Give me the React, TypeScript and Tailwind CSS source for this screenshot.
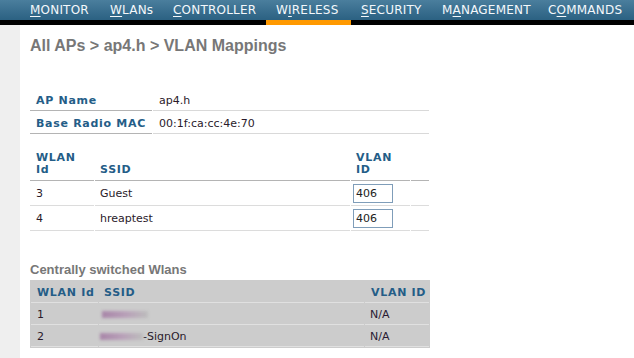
import React from "react";

const nav = [
  { pre: "", u: "M", post: "ONITOR", cls: "w-[80px]" },
  { pre: "", u: "W", post: "LANs", cls: "w-[63px]" },
  { pre: "", u: "C", post: "ONTROLLER", cls: "w-[103px]" },
  { pre: "W", u: "I", post: "RELESS", cls: "w-[85px]" },
  { pre: "", u: "S", post: "ECURITY", cls: "w-[81px]" },
  { pre: "M", u: "A", post: "NAGEMENT", cls: "w-[106px]" },
  { pre: "C", u: "O", post: "MMANDS", cls: "w-[92px]" },
];

const verdana = { fontFamily: '"DejaVu Sans", Verdana, sans-serif' };
const arial = { fontFamily: '"Liberation Sans", Arial, sans-serif' };

function Blur({ w }: { w: string }) {
  return (
    <span className={`inline-block align-middle h-[7px] ${w} blur-[1.5px] bg-gradient-to-r from-[#a886a8] via-[#b89fb8] to-[#bdbdbd]`} />
  );
}

const th = "font-bold text-[#245d87] tracking-[0.7px]";

export default function App() {
  return (
    <div className="w-[634px] h-[358px] overflow-hidden bg-white flex flex-col" style={verdana}>
      {/* nav */}
      <div className="h-[20px] flex pl-[20px] bg-gradient-to-b from-[#4a7e9d] to-[#2b6182]">
        {nav.map((n, i) => (
          <div key={i} className={`${n.cls} pl-[10px] text-[12px] leading-[20px] text-[#f4f8fb] whitespace-nowrap tracking-[0.2px]`}>
            {n.pre}
            <u className="underline underline-offset-[2px]">{n.u}</u>
            {n.post}
          </div>
        ))}
      </div>
      <div className="h-[5px] bg-black flex">
        <div className="w-[266px]" />
        <div className="w-[85px] bg-[#ff9900]" />
      </div>

      <div className="flex flex-1">
        <div className="w-[20px] bg-[#efefef]" />
        <div className="flex-1 pl-[10px]">
          <div className="mt-[12px] text-[16px] leading-[18px] font-bold text-[#777777]" style={arial}>
            All APs &gt; ap4.h &gt; VLAN Mappings
          </div>

          {/* AP info */}
          <div className="mt-[33px] grid grid-cols-[122px_276px] gap-x-[1px] text-[11px] leading-[13px]">
            <div className={`pt-[6px] pb-[3px] pl-[6px] border-b border-[#b4b4b4] ${th}`}>AP Name</div>
            <div className="pt-[6px] pb-[3px] pl-[6px] border-b border-[#d9d9d9] text-[#2a1a2a]">ap4.h</div>
            <div className={`pt-[6px] pb-[3px] pl-[6px] border-b border-[#b4b4b4] ${th}`}>Base Radio MAC</div>
            <div className="pt-[6px] pb-[3px] pl-[6px] border-b border-[#d9d9d9] text-[#2a1a2a]">00:1f:ca:cc:4e:70</div>
          </div>

          {/* WLAN table */}
          <div className="mt-[14px] grid grid-cols-[64px_255px_59px_18px] gap-x-[1px] text-[11px] leading-[12px] w-[399px]">
            <div className={`pt-[4px] pb-[4px] pl-[6px] border-b border-[#b4b4b4] flex flex-col justify-end ${th}`}>
              <span>WLAN</span>
              <span>Id</span>
            </div>
            <div className={`pt-[4px] pb-[4px] pl-[5px] border-b border-[#b4b4b4] flex flex-col justify-end ${th}`}>
              <span>SSID</span>
            </div>
            <div className={`pt-[4px] pb-[4px] pl-[5px] border-b border-[#b4b4b4] flex flex-col justify-end ${th}`}>
              <span>VLAN</span>
              <span>ID</span>
            </div>
            <div className="border-b border-[#b4b4b4]" />

            {[
              { id: "3", ssid: "Guest" },
              { id: "4", ssid: "hreaptest" },
            ].map((r) => (
              <React.Fragment key={r.id}>
                <div className="h-[25px] pt-[6px] pl-[6px] leading-[13px] border-b border-[#dcdcdc] text-[#2a1a2a]">{r.id}</div>
                <div className="h-[25px] pt-[6px] pl-[5px] leading-[13px] border-b border-[#dcdcdc] text-[#2a1a2a]">{r.ssid}</div>
                <div className="h-[25px] pt-[3px] pl-[2px] border-b border-[#dcdcdc]">
                  <div className="w-[40px] h-[19px] border border-[#7f9db9] bg-white pl-[2px] text-[11px] leading-[17px] text-[#222]">406</div>
                </div>
                <div className="h-[25px] border-b border-[#dcdcdc]" />
              </React.Fragment>
            ))}
          </div>

          <div className="mt-[31px] text-[13px] leading-[15px] font-bold text-[#777777]" style={arial}>
            Centrally switched Wlans
          </div>

          {/* Central table */}
          <div className="mt-[3px] w-[400px] bg-[#cccccc] pl-[1px] pr-[1px] pb-[1px] grid grid-cols-[67px_265px_64px] gap-x-[1px] text-[11px] leading-[13px]">
            <div className={`pt-[6px] pb-[3px] pl-[6px] border-b border-[#e0e0e0] ${th}`}>WLAN Id</div>
            <div className={`pt-[6px] pb-[3px] pl-[5px] border-b border-[#e0e0e0] ${th}`}>SSID</div>
            <div className={`pt-[6px] pb-[3px] pl-[6px] border-b border-[#e0e0e0] ${th}`}>VLAN ID</div>

            <div className="pt-[5px] pb-[3px] pl-[6px] border-b border-[#e0e0e0] text-[#2a1a2a]">1</div>
            <div className="pt-[5px] pb-[3px] pl-[3px] border-b border-[#e0e0e0] text-[#2a1a2a] flex items-center">
              <Blur w="w-[46px]" />
            </div>
            <div className="pt-[5px] pb-[3px] pl-[5px] border-b border-[#e0e0e0] text-[#2a1a33]">N/A</div>

            <div className="pt-[5px] pb-[3px] pl-[6px] border-b border-[#e0e0e0] text-[#2a1a2a]">2</div>
            <div className="pt-[5px] pb-[3px] pl-[1px] border-b border-[#e0e0e0] text-[#2a1a2a] flex items-center">
              <Blur w="w-[43px]" />
              <span>-SignOn</span>
            </div>
            <div className="pt-[5px] pb-[3px] pl-[5px] border-b border-[#e0e0e0] text-[#2a1a33]">N/A</div>
          </div>
        </div>
      </div>
    </div>
  );
}
